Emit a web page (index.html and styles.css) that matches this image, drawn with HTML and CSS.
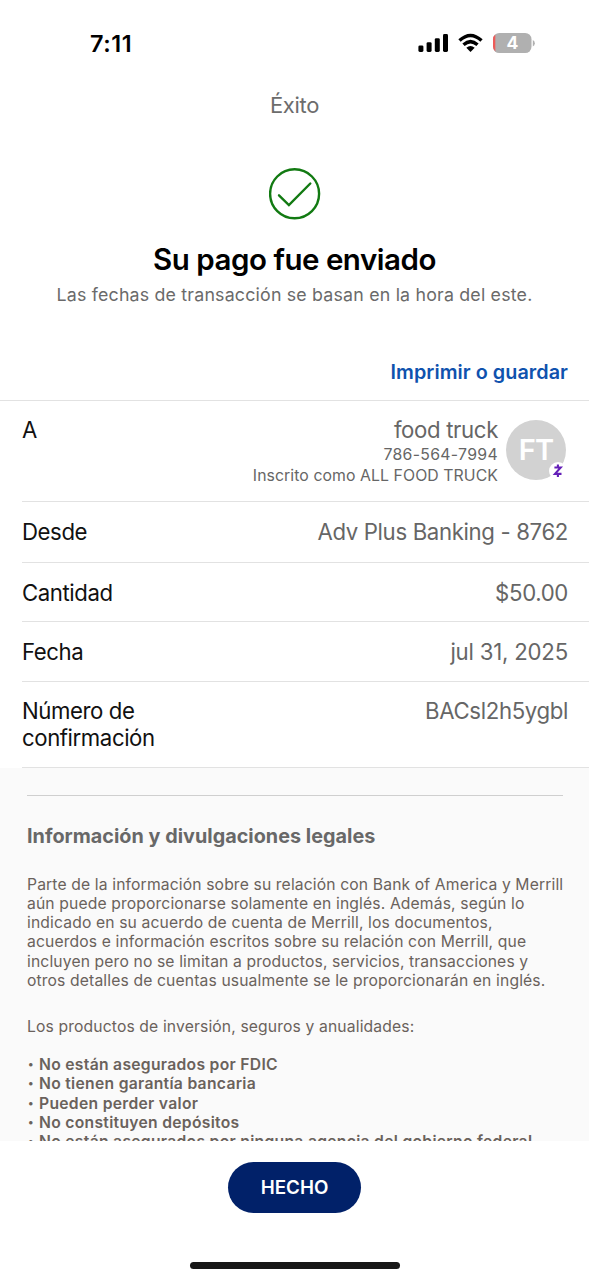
FILE: index.html
```html
<!DOCTYPE html>
<html lang="es">
<head>
<meta charset="utf-8">
<meta name="viewport" content="width=device-width, initial-scale=1">
<title>Éxito</title>
<link rel="stylesheet" href="styles.css">
</head>
<body>
<div class="screen">
  <div class="status">
    <span class="clock">7:11</span>
    <svg class="status-icons" width="118" height="24" viewBox="0 0 118 24">
      <rect x="0.4" y="13.4" width="5" height="6.6" rx="1.4"/>
      <rect x="8.6" y="10.2" width="5" height="9.8" rx="1.4"/>
      <rect x="16.8" y="6.2" width="5" height="13.8" rx="1.4"/>
      <rect x="25" y="2" width="5" height="18" rx="1.4"/>
      <path d="M41.500 8.600Q52.500 -1.600 63.500 8.600" class="arc"/>
      <path d="M45.500 12.800Q52.500 6.400 59.500 12.800" class="arc"/>
      <path d="M48.300 15.800Q52.500 12.200 56.700 15.800L52.500 20Z"/>
      <rect x="75" y="1" width="38.500" height="20" rx="6.300" class="cell"/>
      <path d="M77.300 2.600A6.300 6.300 0 0 0 75 7.300V14.700A6.300 6.300 0 0 0 77.300 19.400Z" class="low"/>
      <path d="M114.800 8V14.400Q116.800 13.600 116.800 11.200T114.800 8Z" class="cell"/>
      <text x="94.300" y="17.300" text-anchor="middle" class="level">4</text>
    </svg>
  </div>

  <header class="nav">Éxito</header>

  <section class="hero">
    <svg class="check" width="52" height="52" viewBox="0 0 52 52">
      <circle cx="25.600" cy="25.800" r="24.500"/>
      <path d="M10 27.300L19.900 37L41.300 15.500"/>
    </svg>
    <h1 class="title">Su pago fue enviado</h1>
    <p class="subtitle">Las fechas de transacción se basan en la hora del este.</p>
  </section>

  <div class="actions"><a class="print">Imprimir o guardar</a></div>

  <main class="details">
    <div class="row row-to">
      <span class="label">A</span>
      <div class="payee">
        <div class="payee-text">
          <span class="value payee-name">food truck</span>
          <span class="phone">786-564-7994</span>
          <span class="enrolled">Inscrito como ALL FOOD TRUCK</span>
        </div>
        <div class="avatar"><span class="initials">FT</span>
          <svg class="badge" width="18" height="18" viewBox="0 0 18 18">
            <circle cx="9" cy="9" r="9"/>
            <path d="M5.400 5.500H11.700L6 11.900H12.500M8.900 2.500V5.500M8.900 11.900V15"/>
          </svg>
        </div>
      </div>
    </div>
    <div class="row row-from"><span class="label">Desde</span><span class="value account">Adv Plus Banking - 8762</span></div>
    <div class="row row-amount"><span class="label">Cantidad</span><span class="value amount">$50.00</span></div>
    <div class="row row-date"><span class="label">Fecha</span><span class="value date">jul 31, 2025</span></div>
    <div class="row row-number"><span class="label">Número de<br>confirmación</span><span class="value code">BACsl2h5ygbl</span></div>
  </main>

  <section class="legal">
    <hr class="rule">
    <h2 class="legal-title">Información y divulgaciones legales</h2>
    <p class="legal-text">Parte de la información sobre su relación con Bank of America y Merrill<br>aún puede proporcionarse solamente en inglés. Además, según lo<br>indicado en su acuerdo de cuenta de Merrill, los documentos,<br>acuerdos e información escritos sobre su relación con Merrill, que<br>incluyen pero no se limitan a productos, servicios, transacciones y<br>otros detalles de cuentas usualmente se le proporcionarán en inglés.</p>
    <p class="legal-text products">Los productos de inversión, seguros y anualidades:</p>
    <ul class="notes">
      <li>No están asegurados por FDIC</li>
      <li>No tienen garantía bancaria</li>
      <li>Pueden perder valor</li>
      <li>No constituyen depósitos</li>
      <li>No están asegurados por ninguna agencia del gobierno federal</li>
    </ul>
  </section>

  <footer class="footer">
    <button class="done">HECHO</button>
    <div class="home-bar"></div>
  </footer>
</div>
</body>
</html>
```
FILE: styles.css
```css
* { box-sizing: border-box; margin: 0; padding: 0; }
body { background: #fff; font-family: Inter, "Liberation Sans", sans-serif; color: #111; }
.screen { width: 589px; height: 1280px; overflow: hidden; display: flex; flex-direction: column; white-space: nowrap; }

.status { height: 87px; flex: none; display: flex; justify-content: space-between; align-items: flex-start; padding: 32px 53px 0 90px; }
.clock { font-size: 23.4px; font-weight: 600; line-height: 24px; color: #000; letter-spacing: 0.6px; }
.status-icons { flex: none; fill: #000; }
.arc { fill: none; stroke: #000; stroke-width: 3.4; }
.cell { fill: #b0b0b0; }
.low { fill: #ee5a58; }
.level { fill: #fff; font-size: 17.5px; font-weight: 700; }

.nav { height: 37px; flex: none; text-align: center; font-size: 22px; line-height: 36px; color: #6c6c6c; letter-spacing: -0.35px; }

.hero { height: 226px; flex: none; padding-top: 44px; display: flex; flex-direction: column; align-items: center; }
.check { fill: none; stroke: #127a12; stroke-width: 2.4; stroke-linecap: round; }
.title { margin-top: 19px; font-size: 29.5px; line-height: 40px; font-weight: 600; color: #000; letter-spacing: -0.48px; }
.subtitle { margin-top: 4px; font-size: 17.8px; line-height: 24px; color: #6a6a6a; letter-spacing: 0.19px; }

.actions { height: 51px; flex: none; padding: 10px 21px 0; text-align: right; border-bottom: 1px solid #e2e2e2; }
.print { font-size: 19.8px; line-height: 24px; font-weight: 600; color: #0f52ae; letter-spacing: 0.05px; }

.details { flex: none; padding-left: 22px; }
.row { display: flex; justify-content: space-between; align-items: flex-start; padding-right: 21px; border-bottom: 1px solid #e2e2e2; }
.label, .value { font-size: 22.2px; line-height: 26.500px; }
.label { color: #111; letter-spacing: -0.42px; }
.value { color: #666; letter-spacing: -0.35px; }
.date { letter-spacing: -0.2px; }
.row-to { height: 101px; padding-top: 16px; padding-right: 23px; }
.row-from { height: 61px; padding-top: 17px; }
.row-amount { height: 59px; padding-top: 17px; }
.row-date { height: 60px; padding-top: 17px; }
.row-number { height: 86px; padding-top: 16px; }
.payee { display: flex; gap: 8px; }
.payee-text { display: flex; flex-direction: column; align-items: flex-end; }
.phone, .enrolled { font-size: 15.8px; line-height: 21px; color: #666; }
.phone { letter-spacing: 0.33px; }
.enrolled { letter-spacing: 0.08px; }
.avatar { position: relative; width: 60px; height: 60px; margin-top: 3px; border-radius: 50%; background: #d2d2d2; text-align: center; }
.initials { font-size: 29px; line-height: 60px; font-weight: 600; color: #fff; letter-spacing: -0.8px; }
.badge { position: absolute; right: -1px; bottom: 0; fill: #fff; }
.badge path { fill: none; stroke: #6420b8; stroke-width: 2.1; }

.legal { height: 373px; flex: none; overflow: hidden; background: #fafafa; padding: 27px 26px 0 27px; }
.rule { border: 0; height: 1px; background: #cfcfcf; }
.legal-title { margin-top: 27px; font-size: 19.8px; line-height: 26px; font-weight: 700; color: #686868; letter-spacing: 0.02px; }
.legal-text { margin-top: 26px; font-size: 15.7px; line-height: 19.150px; color: #6a625c; letter-spacing: 0.13px; }
.products { margin-top: 27px; }
.notes { margin-top: 19px; list-style: none; font-size: 15.7px; line-height: 19.200px; font-weight: 600; color: #6a625c; letter-spacing: 0.29px; }
.notes li { display: flex; gap: 5px; }
.notes li::before { content: "•"; font-size: 11px; margin-left: 1px; width: 6px; }

.footer { flex: 1; display: flex; flex-direction: column; align-items: center; padding-top: 21px; background: #fff; }
.done { width: 133px; height: 51px; border: 0; border-radius: 26px; background: #012169; color: #fff; font-family: inherit; font-size: 18.8px; font-weight: 600; }
.home-bar { width: 210px; height: 7px; margin-top: 49px; border-radius: 4px; background: #171717; }
```
